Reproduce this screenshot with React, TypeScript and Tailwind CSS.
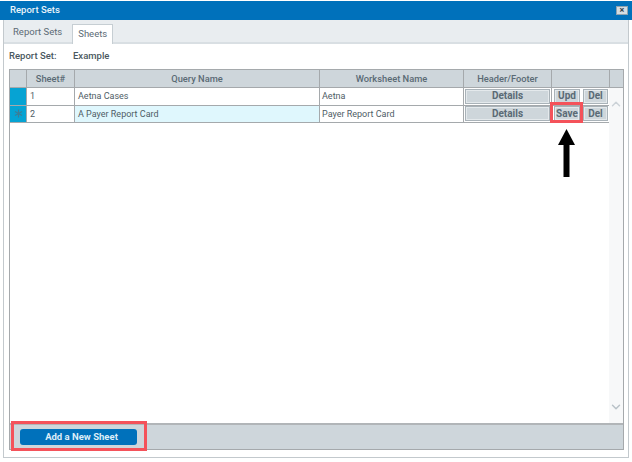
import { ChevronDown, ChevronUp } from "lucide-react";

const rows = [
  { id: "1", query: "Aetna Cases", sheet: "Aetna", action: "Upd", active: false },
  { id: "2", query: "A Payer Report Card", sheet: "Payer Report Card", action: "Save", active: true },
];

function GridButton({ label, className }: { label: string; className: string }) {
  return (
    <button className={`h-[15px] bg-[#ced6db] border border-[#a9b2b8] shadow-[inset_0_0_0_1px_#e4e9ec] text-[10px] font-bold leading-none text-[#5a6a75] ${className}`}>
      {label}
    </button>
  );
}

export default function App() {
  return (
    <div className="relative w-[632px] h-[462px] bg-white overflow-hidden font-['Roboto',sans-serif] pt-px">
      {/* Title bar */}
      <div className="h-[19px] bg-[#0071bb] flex items-center justify-between pl-[10px] pr-[4px]">
        <span className="text-[9.5px] font-medium text-[#e8f3fa]">Report Sets</span>
        <div className="w-[12px] h-[9px] bg-[#d5dde2] border border-[#8fa3b0] flex items-center justify-center text-[9px] leading-none font-bold text-[#33424c]">×</div>
      </div>

      <div className="h-[438px] mx-[3px] border-x border-b border-[#c3c9cd] flex flex-col">
        {/* Tabs */}
        <div className="h-[24px] shrink-0 bg-[#e9edf0] border-b-2 border-[#d9dfe3] flex items-end pl-[1px] gap-[2px]">
          <div className="h-[20px] px-[8px] flex items-center text-[9.5px] text-[#5c6b75]">Report Sets</div>
          <div className="h-[20px] -mb-[2px] px-[5px] bg-white border border-b-0 border-[#c6ced3] flex items-center text-[9.5px] text-[#5c6b75]">Sheets</div>
        </div>

        {/* Report set line */}
        <div className="h-[25px] shrink-0 flex items-center pl-[5px] text-[9.5px] font-medium text-[#4a5860]">
          <span className="w-[64px]">Report Set:</span>
          <span>Example</span>
        </div>

        {/* Grid */}
        <div className="mx-[5px] w-[615px] h-[381px] border border-[#a5a9ac] flex flex-col text-[#4f5d66]">
          <div className="h-[18px] shrink-0 bg-[#ced6db] border-b border-[#a5a9ac] flex text-[9.3px] font-medium text-[#5a6a75] text-center leading-[17px]">
            <div className="w-[17px] border-r border-[#a5a9ac]" />
            <div className="w-[48px] border-r border-[#a5a9ac]">Sheet#</div>
            <div className="w-[245px] border-r border-[#a5a9ac]">Query Name</div>
            <div className="w-[144px] border-r border-[#a5a9ac]">Worksheet Name</div>
            <div className="w-[88px] border-r border-[#a5a9ac]">Header/Footer</div>
            <div className="w-[58px] border-r border-[#a5a9ac]" />
            <div className="flex-1" />
          </div>

          <div className="flex-1 flex min-h-0">
            <div className="w-[599px]">
              {rows.map((r) => (
                <div key={r.id} className={`h-[17.5px] flex border-b border-[#a5a9ac] text-[9px] leading-[16px] ${r.active ? "bg-[#dff7fd]" : "bg-white"}`}>
                  <div className="w-[17px] bg-[#06a3d3] border-r border-[#a5a9ac] flex items-center justify-center">
                    {r.active && (
                      <svg width="9" height="9" viewBox="0 0 9 9" stroke="#3d7d96" strokeWidth="1.2">
                        <path d="M4.5 0.5V8.5M1 2.5L8 6.5M8 2.5L1 6.5" />
                      </svg>
                    )}
                  </div>
                  <div className="w-[48px] bg-white border-r border-[#a5a9ac] pl-[3px]">{r.id}</div>
                  <div className="w-[245px] border-r border-[#a5a9ac] pl-[3px]">{r.query}</div>
                  <div className="w-[144px] bg-white border-r border-[#a5a9ac] pl-[2px]">{r.sheet}</div>
                  <div className="w-[88px] bg-white border-r border-[#a5a9ac] flex items-center pl-px">
                    <GridButton label="Details" className="w-[85px]" />
                  </div>
                  <div className="flex-1 bg-white flex items-center pl-[2px] gap-[3px]">
                    <GridButton label={r.action} className="w-[26px]" />
                    <GridButton label="Del" className="w-[25px]" />
                  </div>
                </div>
              ))}
            </div>
            <div className="flex-1 bg-[#f7f8f9] flex flex-col items-center justify-between pt-[9px] pb-[9px]">
              <ChevronUp size={14} strokeWidth={2.5} className="text-[#ccd3d8]" />
              <ChevronDown size={14} strokeWidth={2.5} className="text-[#b9c2c8]" />
            </div>
          </div>

          {/* Footer */}
          <div className="h-[26px] shrink-0 bg-[#ced6db] border-t-2 border-[#b1b5b8] flex items-center pl-[10px]">
            <button className="w-[117px] h-[16px] pl-[6px] rounded-[3px] bg-[#0071bb] text-[9.5px] font-bold text-[#dcedf8]">Add a New Sheet</button>
          </div>
        </div>
      </div>

      {/* Annotations */}
      <div className="absolute left-[550px] top-[102px] w-[33px] h-[21px] border-[3px] border-[#f4525a]" />
      <div className="absolute left-[11px] top-[421px] w-[136px] h-[30px] border-[3px] border-[#f4525a]" />
      <svg className="absolute left-[558px] top-[129px]" width="18" height="49" viewBox="0 0 18 49">
        <path d="M8.5 0 L17 16 H11.5 V48 H5.5 V16 H0 Z" fill="#000" />
      </svg>
    </div>
  );
}
